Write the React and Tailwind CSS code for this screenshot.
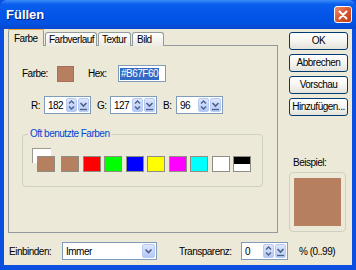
import React from 'react'

const recent = ['#B67F60', '#B67F60', '#FF0000', '#00FF00', '#0000FF', '#FFFF00', '#FF00FF', '#00FFFF', '#FFFFFF']

const SpinArrows = () => (
  <div className="w-[11px] h-[14px] rounded-[2px] bg-gradient-to-b from-[#DCE6FE] to-[#B4C8F6] border border-[#B9CBF3] flex items-center justify-center">
    <svg width="9" height="12" viewBox="0 0 9 12">
      <path d="M2 4.5 L4.5 2 L7 4.5" fill="none" stroke="#4D6185" strokeWidth="1.4" />
      <path d="M2 7.5 L4.5 10 L7 7.5" fill="none" stroke="#4D6185" strokeWidth="1.4" />
    </svg>
  </div>
)

const DropArrow = () => (
  <div className="w-[11px] h-[14px] rounded-[2px] bg-gradient-to-b from-[#DCE6FE] to-[#B4C8F6] border border-[#B9CBF3] flex items-center justify-center">
    <svg width="9" height="12" viewBox="0 0 9 12">
      <path d="M1.5 4 L4.5 7 L7.5 4" fill="none" stroke="#4D6185" strokeWidth="1.6" />
      <path d="M1 10.5 H8" stroke="#4D6185" strokeWidth="1.2" />
    </svg>
  </div>
)

const Spin = ({ value }) => (
  <div className="flex items-center h-[18px] w-[47px] bg-white border border-[#7F9DB9] pr-px gap-px">
    <span className="flex-1 pl-[3px]">{value}</span>
    <SpinArrows />
    <DropArrow />
  </div>
)

const Button = ({ children }) => (
  <button className="h-[18px] w-[59px] rounded-[3px] border border-[#003C74] bg-gradient-to-b from-white via-[#F6F5F0] to-[#E3E2DA] text-black leading-none tracking-[-0.5px]">
    {children}
  </button>
)

export default function App() {
  return (
    <div className="w-[356px] h-[270px] overflow-hidden bg-[#0A4FDF] text-[10px] tracking-[-0.5px] text-black font-['Liberation_Sans',sans-serif] flex flex-col">
      {/* title bar */}
      <div className="h-[29px] shrink-0 flex items-center justify-between pl-[6px] pr-[4px] rounded-t-[7px] bg-[linear-gradient(to_bottom,#3D8EF8_0%,#0B5FEE_14%,#0356E8_45%,#0152E3_80%,#0A47CC_100%)]">
        <span className="text-white font-bold text-[13px] tracking-normal [text-shadow:1px_1px_0_#0A1F7A]">Füllen</span>
        <div className="w-[18px] h-[17px] rounded-[3px] border border-white bg-gradient-to-br from-[#EE8A6A] via-[#D9572F] to-[#C03A12] flex items-center justify-center">
          <svg width="10" height="10" viewBox="0 0 10 10">
            <path d="M1.5 1.5 L8.5 8.5 M8.5 1.5 L1.5 8.5" stroke="white" strokeWidth="2" strokeLinecap="round" />
          </svg>
        </div>
      </div>

      {/* body */}
      <div className="mx-[4px] h-[236px] bg-[#ECE9D8] flex flex-col">
        <div className="flex pt-px">
          {/* left: tabs + panel */}
          <div className="ml-[4px] w-[270px] flex flex-col">
            <div className="flex items-end h-[16px] gap-px relative z-10">
              <div className="w-[36px] h-[17px] bg-[#ECE9D8] border-x border-[#919B9C] rounded-t-[3px] flex flex-col">
                <div className="h-[3px] -mx-px rounded-t-[3px] bg-gradient-to-b from-[#E68B2C] to-[#FFC73C]" />
                <span className="pl-[5px] pt-[1px]">Farbe</span>
              </div>
              <div className="w-[52px] h-[14px] border border-b-0 border-[#919B9C] rounded-t-[3px] bg-gradient-to-b from-white to-[#ECEBE5] pl-[3px] leading-[13px]">Farbverlauf</div>
              <div className="w-[33px] h-[14px] border border-b-0 border-[#919B9C] rounded-t-[3px] bg-gradient-to-b from-white to-[#ECEBE5] pl-[3px] leading-[13px]">Textur</div>
              <div className="w-[32px] h-[14px] border border-b-0 border-[#919B9C] rounded-t-[3px] bg-gradient-to-b from-white to-[#ECEBE5] pl-[4px] leading-[13px]">Bild</div>
            </div>
            <div className="-mt-px h-[188px] border border-[#919B9C] bg-[#ECE9D8] flex flex-col">
              {/* Farbe / Hex */}
              <div className="flex items-center mt-[19px] ml-[13px] h-[17px]">
                <span className="w-[35px]">Farbe:</span>
                <div className="w-[17px] h-[16px] bg-[#B67F60] border border-[#A87058]" />
                <span className="ml-[14px] w-[30px]">Hex:</span>
                <div className="w-[48px] h-[17px] bg-white border border-[#7F9DB9] flex items-center pl-px">
                  <span className="bg-[#316AC5] text-white px-px leading-[12px]">#B67F60</span>
                </div>
              </div>

              {/* RGB */}
              <div className="flex items-center mt-[14px] ml-[22px] gap-[6px]">
                {[['R:', 182], ['G:', 127], ['B:', 96]].map(([l, v]) => (
                  <div key={l} className="flex items-center">
                    <span className="w-[13px]">{l}</span>
                    <Spin value={v} />
                  </div>
                ))}
              </div>

              {/* recent colours */}
              <div className="relative mt-[20px] ml-[13px] w-[241px] h-[53px] border border-[#D0D0BF] rounded-[4px]">
                <span className="absolute -top-[7px] left-[5px] px-[2px] bg-[#ECE9D8] text-[#0046D5] leading-[12px]">Oft benutzte Farben</span>
                <div className="absolute left-[9px] top-[13px] w-[19px] h-[15px] bg-white border-l border-t border-[#9C9A8C]" />
                <div className="relative flex mt-[21px] ml-[14px] gap-[3.5px]">
                  {recent.map((c, i) => (
                    <div
                      key={i}
                      className={`w-[18px] h-[16px] border border-[#8E8E84] ${i === 0 ? 'mr-[2.5px]' : ''}`}
                      style={{ backgroundColor: c }}
                    />
                  ))}
                  <div className="w-[18px] h-[16px] border border-[#8E8E84] flex flex-col">
                    <div className="flex-1 bg-black" />
                    <div className="flex-1 bg-white" />
                  </div>
                </div>
              </div>
            </div>
          </div>

          {/* right column */}
          <div className="ml-[11px] w-[59px] flex flex-col pt-[2px]">
            <div className="flex flex-col gap-[4px]">
              <Button>OK</Button>
              <Button>Abbrechen</Button>
              <Button>Vorschau</Button>
              <Button>Hinzufügen...</Button>
            </div>
            <span className="mt-[39px] ml-[4px]">Beispiel:</span>
            <div className="mt-[2px] w-[57px] h-[60px] rounded-[4px] border border-[#D0D0BF] flex items-center justify-center">
              <div className="w-[47px] h-[48px] bg-[#B67F60]" />
            </div>
          </div>
        </div>

        {/* bottom row */}
        <div className="flex items-center mt-[9px] h-[18px]">
          <span className="ml-[5px] w-[53px]">Einbinden:</span>
          <div className="w-[95px] h-[18px] bg-white border border-[#7F9DB9] flex items-center pr-px">
            <span className="flex-1 pl-[3px]">Immer</span>
            <div className="w-[13px] h-[14px] rounded-[2px] bg-gradient-to-b from-[#DCE6FE] to-[#B4C8F6] border border-[#B9CBF3] flex items-center justify-center">
              <svg width="9" height="8" viewBox="0 0 9 8">
                <path d="M1.5 2.5 L4.5 5.5 L7.5 2.5" fill="none" stroke="#4D6185" strokeWidth="1.6" />
              </svg>
            </div>
          </div>
          <span className="ml-[22px] w-[62px]">Transparenz:</span>
          <Spin value={0} />
          <span className="ml-[11px]">% (0..99)</span>
        </div>
      </div>
    </div>
  )
}
